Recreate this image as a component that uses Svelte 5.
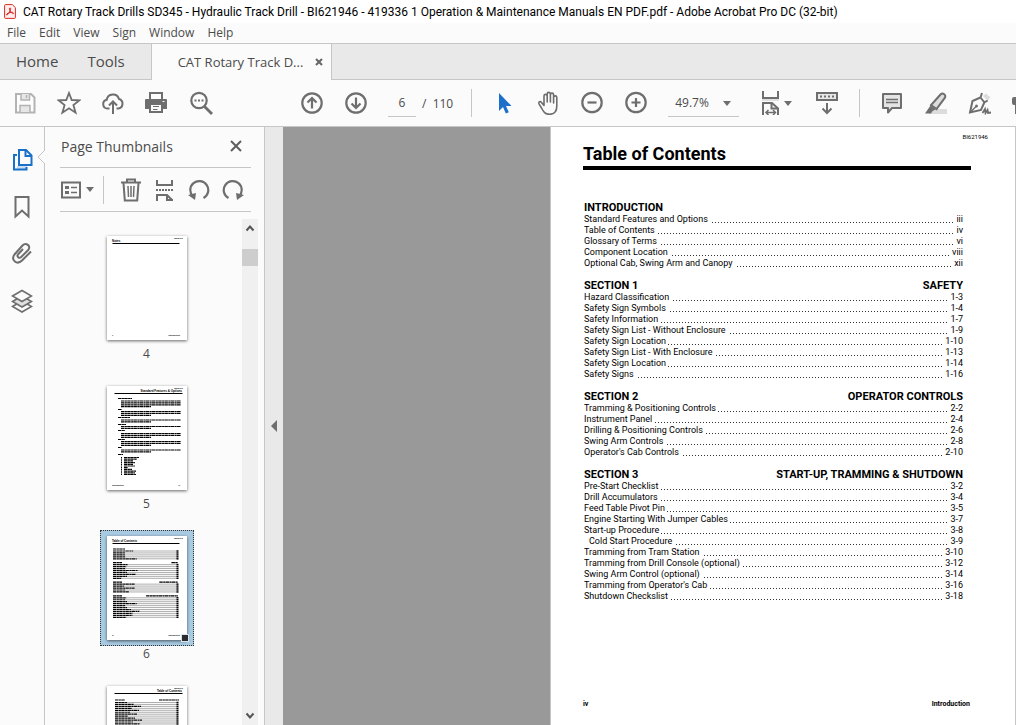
<script lang="ts">
  interface TocEntry {
    title: string;
    page: string;
    nested?: boolean;
  }

  interface TocSection {
    name: string;
    subject?: string;
    entries: TocEntry[];
  }

  interface Line {
    x: number;
    y: number;
    width: number;
    leader?: boolean;
  }

  interface Thumbnail {
    number: number;
    title: string;
    alignRight?: boolean;
    footer?: string[];
    lines: Line[];
  }

  const menus = ['File', 'Edit', 'View', 'Sign', 'Window', 'Help'];

  const sections: TocSection[] = [
    {
      name: 'INTRODUCTION',
      entries: [
        { title: 'Standard Features and Options', page: 'iii' },
        { title: 'Table of Contents', page: 'iv' },
        { title: 'Glossary of Terms', page: 'vi' },
        { title: 'Component Location', page: 'viii' },
        { title: 'Optional Cab, Swing Arm and Canopy', page: 'xii' }
      ]
    },
    {
      name: 'SECTION 1',
      subject: 'SAFETY',
      entries: [
        { title: 'Hazard Classification', page: '1-3' },
        { title: 'Safety Sign Symbols', page: '1-4' },
        { title: 'Safety Information', page: '1-7' },
        { title: 'Safety Sign List - Without Enclosure', page: '1-9' },
        { title: 'Safety Sign Location', page: '1-10' },
        { title: 'Safety Sign List - With Enclosure', page: '1-13' },
        { title: 'Safety Sign Location', page: '1-14' },
        { title: 'Safety Signs', page: '1-16' }
      ]
    },
    {
      name: 'SECTION 2',
      subject: 'OPERATOR CONTROLS',
      entries: [
        { title: 'Tramming & Positioning Controls', page: '2-2' },
        { title: 'Instrument Panel', page: '2-4' },
        { title: 'Drilling & Positioning Controls', page: '2-6' },
        { title: 'Swing Arm Controls', page: '2-8' },
        { title: "Operator's Cab Controls", page: '2-10' }
      ]
    },
    {
      name: 'SECTION 3',
      subject: 'START-UP, TRAMMING & SHUTDOWN',
      entries: [
        { title: 'Pre-Start Checklist', page: '3-2' },
        { title: 'Drill Accumulators', page: '3-4' },
        { title: 'Feed Table Pivot Pin', page: '3-5' },
        { title: 'Engine Starting With Jumper Cables', page: '3-7' },
        { title: 'Start-up Procedure', page: '3-8' },
        { title: 'Cold Start Procedure', page: '3-9', nested: true },
        { title: 'Tramming from Tram Station', page: '3-10' },
        { title: 'Tramming from Drill Console (optional)', page: '3-12' },
        { title: 'Swing Arm Control (optional)', page: '3-14' },
        { title: "Tramming from Operator's Cab", page: '3-16' },
        { title: 'Shutdown Checkslist', page: '3-18' }
      ]
    }
  ];

  // Body lines of the miniature contents page, taken from the real sections
  function contentsLines(): Line[] {
    const lines: Line[] = [];
    let y = 13;
    for (const section of sections) {
      lines.push({ x: 6, y, width: section.name.length });
      if (section.subject) {
        const width = section.subject.length * 1.1;
        lines.push({ x: 71 - width, y, width });
      }
      y += 2;
      for (const entry of section.entries) {
        lines.push({ x: 6, y, width: entry.title.length * 0.7, leader: true });
        y += 1.95;
      }
      y += 1.9;
    }
    return lines;
  }

  // Headed paragraphs followed by a short bulleted list
  function featureLines(): Line[] {
    const lines: Line[] = [];
    const groups = [
      [12.5, 14, 15, 4],
      [23.5, 4, 25.5, 3],
      [31.5, 12, 34, 2],
      [38.5, 8, 40.5, 2],
      [44.5, 7, 47.5, 3],
      [53.5, 7, 55.5, 3],
      [61.5, 4, 64, 2]
    ];
    for (const [y, width, start, count] of groups) {
      lines.push({ x: 11, y, width });
      for (let i = 0; i < count; i++) {
        lines.push({ x: 14, y: start + i * 1.9, width: i === count - 1 ? 30 : 60 });
      }
    }
    lines.push({ x: 11, y: 68.5, width: 5 });
    [15, 13, 9, 11, 9, 11, 4, 8, 12, 11, 12].forEach((width, i) => {
      lines.push({ x: 14, y: 71.5 + i * 1.7, width: 1 }, { x: 17, y: 71.5 + i * 1.7, width });
    });
    return lines;
  }

  function continuedLines(): Line[] {
    const lines: Line[] = [
      { x: 8, y: 14, width: 10 },
      { x: 52, y: 14, width: 20 }
    ];
    for (let i = 0; i < 40; i++) {
      lines.push({ x: 8, y: 16.5 + i * 1.95, width: 12 + ((i * 7) % 16), leader: true });
    }
    return lines;
  }

  const thumbnails: Thumbnail[] = [
    { number: 4, title: 'Notes', footer: ['ii', 'Introduction'], lines: [] },
    {
      number: 5,
      title: 'Standard Features & Options',
      alignRight: true,
      footer: ['Introduction', 'iii'],
      lines: featureLines()
    },
    { number: 6, title: 'Table of Contents', footer: ['iv', 'Introduction'], lines: contentsLines() },
    { number: 7, title: 'Table of Contents', alignRight: true, lines: continuedLines() }
  ];

  let currentPage = $state(6);
  let zoom = $state('49.7%');
</script>

{#snippet caret()}
  <svg class="caret" viewBox="0 0 8 5" aria-hidden="true"><path d="M0 0h8L4 5z" /></svg>
{/snippet}

<div class="app">
  <header class="titlebar">
    <svg class="titlebar__logo" viewBox="0 0 12 15" aria-hidden="true">
      <path d="M1.5.6h6.8l3.1 3v9.8a1 1 0 0 1-1 1H1.6a1 1 0 0 1-1-1V1.6a1 1 0 0 1 .9-1z" fill="#fff0ef" stroke="#dc2a22" />
      <path d="M6 3.9c1.1 0 .7 2.2-.6 4.4S2.7 11.6 2.5 10.7s3.3-2.5 5.1-2.5 2.4 1.2 1.6 1.6-3.8-3-3.8-5c0-.6.2-.9.6-.9z" fill="none" stroke="#d51f17" />
    </svg>
    <h1 class="titlebar__text">CAT Rotary Track Drills SD345 - Hydraulic Track Drill - BI621946 - 419336 1 Operation &amp; Maintenance Manuals EN PDF.pdf - Adobe Acrobat Pro DC (32-bit)</h1>
  </header>

  <nav class="menubar" aria-label="Menu">
    {#each menus as menu}
      <button class="menubar__item">{menu}</button>
    {/each}
  </nav>

  <div class="tabs">
    <button class="tabs__link">Home</button>
    <button class="tabs__link">Tools</button>
    <div class="tabs__document">
      <button class="tabs__name">CAT Rotary Track D...</button>
      <button class="tabs__close" aria-label="Close tab">
        <svg viewBox="0 0 8 8"><path d="M1 1l6 6M7 1L1 7" fill="none" stroke="#666" stroke-width="2" /></svg>
      </button>
    </div>
  </div>

  <div class="toolbar">
    <div class="toolbar__group">
      <button class="tool" aria-label="Save" disabled>
        <svg viewBox="0 0 24 24">
          <path d="M3 3h15l3.5 3.5V21.500H3z" fill="#fdfdfd" stroke="#b3b3b3" stroke-width="2" />
          <path d="M8 3v6h8.500V3M7 21v-6.500h10V21" fill="#e6e6e6" stroke="#b3b3b3" stroke-width="1.500" />
          <path d="M13.500 4v3" stroke="#b3b3b3" stroke-width="1.500" />
        </svg>
      </button>
      <button class="tool" aria-label="Star">
        <svg viewBox="0 0 24 24">
          <path d="M12 2l2.700 7 7.900.3-6.200 4.800 2.200 7.600L12 17.300l-6.600 4.400 2.200-7.600L1.400 9.300l7.900-.3z" fill="none" stroke="#6e6e6e" stroke-width="1.800" />
        </svg>
      </button>
      <button class="tool" aria-label="Upload to cloud">
        <svg viewBox="0 0 24 24">
          <path d="M8.500 17.500H6.400a4.400 4.400 0 0 1-.7-8.700A6.300 6.300 0 0 1 18 8a4.900 4.900 0 0 1-.4 9.500h-2.100" fill="none" stroke="#6e6e6e" stroke-width="2" />
          <path d="M12 23V11M8 14.500l4-4 4 4" fill="none" stroke="#6e6e6e" stroke-width="2" />
        </svg>
      </button>
      <button class="tool" aria-label="Print">
        <svg viewBox="0 0 24 24">
          <path d="M4 1h14v7H4z" fill="#6e6e6e" /><path d="M6 3h10v5H6z" fill="#fbfbfb" />
          <path d="M1 8h20a1 1 0 0 1 1 1v9h-4v4H4v-4H0V9a1 1 0 0 1 1-1z" fill="#6e6e6e" />
          <path d="M6 14h10v6H6z" fill="#fbfbfb" /><path d="M8 15.500h6M8 18.500h4.500" stroke="#6e6e6e" />
          <path d="M17.500 10.500h2" stroke="#fbfbfb" />
        </svg>
      </button>
      <button class="tool" aria-label="Find">
        <svg viewBox="0 0 24 24">
          <circle cx="10" cy="9.500" r="7.700" fill="none" stroke="#6e6e6e" stroke-width="2.200" />
          <path d="M15.500 15.500l7.500 7.500" stroke="#6e6e6e" stroke-width="2.800" />
          <path d="M5.500 9.500h2M9 9.500h2M12.500 9.500h2" stroke="#6e6e6e" stroke-width="2" />
        </svg>
      </button>
    </div>

    <div class="toolbar__group toolbar__group--pages">
      <button class="tool" aria-label="Previous page">
        <svg viewBox="0 0 24 24" fill="none" stroke="#6e6e6e" stroke-width="2.200">
          <circle cx="12" cy="12" r="9.700" /><path d="M12 17.500V7.500M7.500 11.500L12 7l4.500 4.500" />
        </svg>
      </button>
      <button class="tool" aria-label="Next page">
        <svg viewBox="0 0 24 24" fill="none" stroke="#6e6e6e" stroke-width="2.200">
          <circle cx="12" cy="12" r="9.700" /><path d="M12 6.500v10M7.500 12.500L12 17l4.500-4.500" />
        </svg>
      </button>
      <label class="page-count">
        <input class="page-count__input" aria-label="Page number" bind:value={currentPage} />
        <span>/&nbsp; 110</span>
      </label>
    </div>

    <div class="toolbar__group toolbar__group--view">
      <button class="tool" aria-label="Select">
        <svg viewBox="0 0 24 24">
          <path d="M7 2v18l4-4 2.800 6.500 3-1.300-2.800-6.200h5.500z" fill="#1d70c9" />
        </svg>
      </button>
      <button class="tool" aria-label="Hand">
        <svg viewBox="0 0 24 24">
          <path d="M8 14V5a1.600 1.600 0 0 1 3.200 0v6V3a1.600 1.600 0 0 1 3.200 0v8V3.700a1.600 1.600 0 0 1 3.200 0V12 6.500a1.600 1.600 0 0 1 3.200 0V15c0 5-2.500 8.300-7.300 8.300-4.400 0-6-2.300-8-6.300L3 12.800c-.7-2 1.300-2.800 2.500-1.400L8 14.500z" fill="#fbfbfb" stroke="#6e6e6e" stroke-width="1.600" stroke-linejoin="round" />
        </svg>
      </button>
      <button class="tool" aria-label="Zoom out">
        <svg viewBox="0 0 24 24" fill="none" stroke="#6e6e6e" stroke-width="2.200"><circle cx="12" cy="11.500" r="9.700" /><path d="M7.500 11.500h9" /></svg>
      </button>
      <button class="tool" aria-label="Zoom in">
        <svg viewBox="0 0 24 24" fill="none" stroke="#6e6e6e" stroke-width="2.200"><circle cx="12" cy="11.500" r="9.700" /><path d="M7.500 11.500h9M12 7v9" /></svg>
      </button>
      <div class="zoom">
        <select class="zoom__select" aria-label="Zoom level" bind:value={zoom}>
          <option>25%</option>
          <option>49.7%</option>
          <option>100%</option>
        </select>
        {@render caret()}
      </div>
      <button class="tool tool--menu" aria-label="Page fit">
        <svg viewBox="0 0 24 24" fill="none" stroke="#6e6e6e" stroke-width="2">
          <path d="M3 9h17" stroke="#e0e0e0" />
          <path d="M4 0v7h15V0M4 24V12h9l6 5.500V24" /><path d="M12.500 12v5.500H19" />
          <path d="M7.500 21.500h8.500M9.500 19L7 21.500 9.500 24M14 19l2.500 2.500L14 24" stroke-width="1.500" />
        </svg>
        {@render caret()}
      </button>
      <button class="tool" aria-label="Read mode">
        <svg viewBox="0 0 24 24" fill="none" stroke="#6e6e6e" stroke-width="2">
          <path d="M2 2h20v7H2z" fill="#e8e8e8" /><path d="M5 5.500h14" stroke-dasharray="2" />
          <path d="M12 12v9.500M7.500 17.500L12 22l4.500-4.500" />
        </svg>
      </button>
    </div>

    <div class="toolbar__group toolbar__group--comment">
      <button class="tool" aria-label="Add comment">
        <svg viewBox="0 0 24 24">
          <path d="M3 3h18v14h-9l-4 4.500V17H3z" fill="#e4e4e4" stroke="#6e6e6e" stroke-width="2" stroke-linejoin="round" />
          <path d="M6 8.500h12M6 11.500h12" stroke="#6e6e6e" stroke-width="1.300" />
        </svg>
      </button>
      <button class="tool" aria-label="Highlight">
        <svg viewBox="0 0 24 24">
          <path d="M9 18h14v5H5z" fill="#dcdcdc" />
          <path d="M16.500 3.500c1-1 2.500-1.200 3.700-.3s1.500 2.500.6 3.700L12.500 18l-5.500-4z" fill="#dcdcdc" stroke="#6e6e6e" stroke-width="2" />
          <path d="M6.500 14.500l5 4-3 1.500-1.500 2.500L1 22.500z" fill="#6e6e6e" />
        </svg>
      </button>
      <button class="tool" aria-label="Sign">
        <svg viewBox="0 0 24 24" fill="none" stroke="#6e6e6e" stroke-width="2">
          <path d="M15 5l4.500 4.500 3-3L18 2.500z" fill="#dcdcdc" stroke="none" />
          <path d="M14 2l-1.500 4.500L4.500 10 2 21.500l11-2.500 3.300-7.500 3.400-2M12.500 6.500l4 5" />
          <path d="M2 21.500l6-6" stroke-width="1.500" /><circle cx="8.500" cy="15" r="1.500" fill="#6e6e6e" stroke="none" />
          <path d="M14.500 22l2.500-4 .5 4 2-3 .5 3 3-.5" stroke-width="1.800" />
        </svg>
      </button>
      <button class="tool" aria-label="More tools">
        <svg viewBox="0 0 24 24">
          <path d="M2 6h2V2h8v21H3v-9H2a2 2 0 0 1-2-2V8a2 2 0 0 1 2-2z" fill="#6e6e6e" /><path d="M5 14h7v7H5z" fill="#fbfbfb" />
        </svg>
      </button>
    </div>
  </div>

  <main class="workspace">
    <nav class="rail" aria-label="Navigation panels">
      <button class="rail__item rail__item--active" aria-label="Page thumbnails">
        <svg viewBox="0 0 22 24" fill="none" stroke="#1870c8" stroke-width="2">
          <path d="M6 18h10v3H6z" fill="#c9def3" stroke="none" />
          <path d="M8 2h7l5.500 5.500V17H8z" /><path d="M14.500 2v6h6M6 7H3v14.500h12.500V19" />
        </svg>
      </button>
      <button class="rail__item" aria-label="Bookmarks">
        <svg viewBox="0 0 22 24" fill="none" stroke="#6e6e6e" stroke-width="2"><path d="M4.500 2h13v19.500L11 15.500l-6.500 6z" /></svg>
      </button>
      <button class="rail__item" aria-label="Attachments">
        <svg viewBox="0 0 22 24" fill="none" stroke="#6e6e6e" stroke-width="2">
          <path d="M20 9.500l-9 9c-5 5-11.500-.5-7.500-6l8-9C15-.2 20.500 4 17.200 8l-7 7c-2.200 2-5-.5-3-2.800L12 7" />
        </svg>
      </button>
      <button class="rail__item" aria-label="Layers">
        <svg viewBox="0 0 22 24" fill="#fbfbfb" stroke="#6e6e6e" stroke-width="1.600">
          <path d="M1.500 17.500L11 12l9.500 5.500L11 23z" /><path d="M1.500 12.500L11 7l9.500 5.500L11 18z" fill="#e0e0e0" /><path d="M1.500 7L11 1.500 20.500 7 11 12.500z" />
        </svg>
      </button>
      <svg class="rail__pointer" viewBox="0 0 8 14" aria-hidden="true"><path d="M8 0L1 7l7 7" fill="#fbfbfb" stroke="#c6c6c6" /></svg>
    </nav>

    <section class="panel">
      <div class="panel__header">
        <h2 class="panel__title">Page Thumbnails</h2>
        <button class="panel__close" aria-label="Close panel">
          <svg viewBox="0 0 12 12"><path d="M1 1l10 10M11 1L1 11" stroke="#5e5e5e" stroke-width="2" /></svg>
        </button>
      </div>
      <div class="panel__tools">
        <button class="panel__options" aria-label="Options">
          <svg viewBox="0 0 20 20" fill="none" stroke="#6e6e6e" stroke-width="2">
            <path d="M1 2.500h18v15H1z" /><path d="M4 7.500h4M4 12.500h4" stroke-width="3" /><path d="M10 7.500h6M10 12.500h6" stroke-width="1.500" />
          </svg>
          {@render caret()}
        </button>
        <div class="panel__icons">
          <button aria-label="Delete pages">
            <svg viewBox="0 0 22 24" fill="none" stroke="#6e6e6e" stroke-width="2">
              <path d="M1 4.500h20M7 4V1.500h8V4M3.500 5l1.300 17.500h12.400L18.500 5" /><path d="M8 8l.5 11M11 8v11M14 8l-.5 11" stroke-width="1.500" />
            </svg>
          </button>
          <button aria-label="Insert pages">
            <svg viewBox="0 0 22 24" fill="none" stroke="#6e6e6e" stroke-width="2">
              <path d="M3 2v5h15V2M3 23v-6h10l5 5M13 17v5h6" /><path d="M2 12h17" stroke-dasharray="2 1" />
            </svg>
          </button>
          <button aria-label="Rotate counterclockwise">
            <svg viewBox="0 0 22 24" fill="none" stroke="#6e6e6e" stroke-width="2.200">
              <path d="M5 18.500A9 9 0 1 1 15.500 20" /><path d="M0 17l8-2-1 7z" fill="#6e6e6e" stroke="none" />
            </svg>
          </button>
          <button aria-label="Rotate clockwise">
            <svg viewBox="0 0 22 24" fill="none" stroke="#6e6e6e" stroke-width="2.200">
              <path d="M17 18.500A9 9 0 1 0 6.500 20" /><path d="M22 17l-8-2 1 7z" fill="#6e6e6e" stroke="none" />
            </svg>
          </button>
        </div>
      </div>

      <div class="panel__body">
        <ul class="thumbnails">
          {#each thumbnails as thumb (thumb.number)}
            <li>
              <button class="thumbnail" onclick={() => (currentPage = thumb.number)}>
                <span class="thumbnail__frame" class:thumbnail__frame--selected={thumb.number === currentPage}>
                  <svg class="thumbnail__page" viewBox="0 0 80 104" aria-hidden="true">
                    <text x="76" y="3" text-anchor="end" class="thumbnail__code">BI621946</text>
                    <text
                      x={thumb.alignRight ? 75 : 5}
                      y="6"
                      text-anchor={thumb.alignRight ? 'end' : 'start'}
                      class="thumbnail__title">{thumb.title}</text
                    >
                    <path d={thumb.alignRight ? 'M7.500 7.500h68' : 'M5.500 7.500h67'} stroke="#000" />
                    {#each thumb.lines as line}
                      <path d="M{line.x} {line.y}h{line.width}" stroke="#000" stroke-width="1.200" stroke-dasharray="3.500 .4 2 .3" />
                      {#if line.leader}
                        <path d="M{line.x + line.width} {line.y}H70" stroke="#999" stroke-width=".8" />
                        <path d="M69.500 {line.y}h2" stroke="#000" stroke-width="1.500" />
                      {/if}
                    {/each}
                    {#if thumb.footer}
                      <text x="5" y="100" class="thumbnail__footer">{thumb.footer[0]}</text>
                      <text x="73" y="100" text-anchor="end" class="thumbnail__footer">{thumb.footer[1]}</text>
                    {/if}
                  </svg>
                  {#if thumb.number === currentPage}
                    <span class="thumbnail__handle"></span>
                  {/if}
                </span>
                <span class="thumbnail__number">{thumb.number}</span>
              </button>
            </li>
          {/each}
        </ul>
        <div class="scrollbar">
          <svg viewBox="0 0 10 8" fill="none" stroke="#555" stroke-width="2"><path d="M1.500 6.500L5 2.500l3.500 4" /></svg>
          <div class="scrollbar__thumb"></div>
          <svg viewBox="0 0 10 8" fill="none" stroke="#555" stroke-width="2"><path d="M1.500 1.500L5 5.500l3.500-4" /></svg>
        </div>
      </div>
    </section>

    <button class="splitter" aria-label="Collapse panel">
      <svg viewBox="0 0 6 12"><path d="M6 0v12L0 6z" fill="#6e6e6e" /></svg>
    </button>

    <div class="document">
      <article class="page">
        <p class="page__code">BI621946</p>
        <h2 class="page__title">Table of Contents</h2>
        <div class="toc">
          {#each sections as section}
            <section>
              <h3 class="toc__heading">
                <span>{section.name}</span>
                {#if section.subject}<span>{section.subject}</span>{/if}
              </h3>
              <ul class="toc__entries">
                {#each section.entries as entry}
                  <li class="toc__entry" class:toc__entry--nested={entry.nested}>
                    <span>{entry.title}</span>
                    <span class="toc__leader"></span>
                    <span>{entry.page}</span>
                  </li>
                {/each}
              </ul>
            </section>
          {/each}
        </div>
        <footer class="page__footer">
          <span>iv</span>
          <span>Introduction</span>
        </footer>
      </article>
    </div>
  </main>
</div>

<style>
  :global(body) {
    margin: 0;
  }

  .app {
    display: flex;
    flex-direction: column;
    height: 100vh;
    overflow: hidden;
    background: #fbfbfb;
    color: #4b4b4b;
    font-family: "Open Sans", "Noto Sans", sans-serif;
    font-size: 12px;
  }

  h1,
  h2,
  h3,
  p,
  ul {
    margin: 0;
    padding: 0;
    font-weight: 400;
    list-style: none;
  }

  button,
  input,
  select {
    margin: 0;
    padding: 0;
    border: 0;
    background: none;
    color: inherit;
    font: inherit;
  }

  svg {
    display: block;
    flex: none;
  }

  .caret {
    width: 8px;
    height: 5px;
    fill: #6e6e6e;
  }

  .titlebar {
    display: flex;
    align-items: center;
    flex: none;
    gap: 7px;
    height: 23px;
    padding-left: 4px;
    background: #fff;
  }

  .titlebar__logo {
    width: 12px;
    height: 15px;
  }

  .titlebar__text {
    color: #000;
    font-family: Roboto, "Open Sans", sans-serif;
    font-size: 12px;
    white-space: nowrap;
  }

  .menubar {
    display: flex;
    flex: none;
    gap: 13px;
    height: 20px;
    padding-left: 7px;
  }

  .menubar__item {
    padding-bottom: 2px;
  }

  .tabs {
    display: flex;
    align-items: stretch;
    flex: none;
    height: 36px;
    border-top: 1px solid #c6c6c6;
    box-shadow: inset 0 -1px #c6c6c6;
    background: #e9e9e9;
    font-size: 15px;
  }

  .tabs__link {
    padding: 0 13px 2px 16px;
  }

  .tabs__document {
    display: flex;
    align-items: center;
    justify-content: space-between;
    box-sizing: border-box;
    width: 181px;
    margin-left: 13px;
    padding: 0 8px 0 26px;
    border: solid #c6c6c6;
    border-width: 0 1px;
    background: #fbfbfb;
    font-size: 13px;
  }

  .tabs__close svg {
    width: 8px;
    height: 8px;
  }

  .toolbar {
    display: flex;
    align-items: center;
    flex: none;
    height: 46px;
    padding-left: 13px;
    border-bottom: 1px solid #c6c6c6;
    overflow: hidden;
  }

  .toolbar__group {
    display: flex;
    align-items: center;
    flex: none;
    gap: 20px;
    height: 28px;
  }

  .toolbar__group--pages {
    margin-left: 87px;
  }

  .toolbar__group--view,
  .toolbar__group--comment {
    margin-left: 18px;
    padding-left: 20px;
    border-left: 1px solid #c6c6c6;
  }

  .toolbar__group--comment {
    margin-left: 20px;
  }

  .tool svg:first-child {
    width: 24px;
    height: 24px;
  }

  .tool--menu {
    display: flex;
    align-items: center;
    gap: 1px;
    margin-right: 3px;
  }

  .page-count {
    display: flex;
    align-items: center;
    gap: 6px;
  }

  .page-count__input {
    width: 28px;
    height: 27px;
    border-bottom: 1px solid #c6c6c6;
    border-radius: 0;
    text-align: center;
  }

  .zoom {
    position: relative;
    border-bottom: 1px solid #c6c6c6;
  }

  .zoom__select {
    width: 71px;
    height: 27px;
    padding-left: 7px;
    appearance: none;
  }

  .zoom .caret {
    position: absolute;
    top: 12px;
    right: 8px;
    pointer-events: none;
  }

  .workspace {
    display: flex;
    flex: 1;
    min-height: 0;
  }

  .rail {
    position: relative;
    display: flex;
    flex-direction: column;
    align-items: center;
    flex: none;
    gap: 23px;
    width: 44px;
    padding-top: 21px;
    border-right: 1px solid #c6c6c6;
  }

  .rail__item svg {
    width: 22px;
    height: 24px;
  }

  .rail__pointer {
    position: absolute;
    top: 23px;
    right: -1px;
    width: 8px;
    height: 14px;
  }

  .panel {
    display: flex;
    flex-direction: column;
    flex: none;
    width: 219px;
    border-right: 1px solid #c6c6c6;
  }

  .panel__header {
    display: flex;
    align-items: center;
    justify-content: space-between;
    height: 40px;
    margin: 0 13px 0 15px;
    border-bottom: 1px solid #c6c6c6;
  }

  .panel__title {
    padding: 0 0 2px 1px;
    font-size: 14px;
  }

  .panel__close {
    padding: 0 9px 2px 0;
  }

  .panel__close svg {
    width: 12px;
    height: 12px;
  }

  .panel__tools {
    display: flex;
    align-items: center;
    height: 43px;
    margin: 0 13px 0 15px;
    border-bottom: 1px solid #c6c6c6;
  }

  .panel__options {
    display: flex;
    align-items: center;
    gap: 5px;
    height: 28px;
    padding: 0 9px 0 1px;
    border-right: 1px solid #c6c6c6;
  }

  .panel__options svg:first-child {
    width: 20px;
    height: 20px;
  }

  .panel__icons {
    display: flex;
    gap: 12px;
    padding-left: 16px;
  }

  .panel__icons svg {
    width: 22px;
    height: 24px;
  }

  .panel__body {
    display: flex;
    flex: 1;
    min-height: 0;
    margin-top: 7px;
  }

  .thumbnails {
    flex: 1;
    padding-top: 11px;
    padding-left: 6px;
    overflow: hidden;
  }

  .thumbnail {
    display: flex;
    flex-direction: column;
    align-items: center;
    width: 100%;
    height: 150px;
  }

  .thumbnail__frame {
    position: relative;
    padding: 5px 6px;
    border: 1px solid transparent;
  }

  .thumbnail__frame--selected {
    border: 1px dotted #333;
    background: #a9cbe2;
  }

  .thumbnail__page {
    width: 80px;
    height: 104px;
    background: #fff;
    box-shadow: 0 1px 3px rgba(0, 0, 0, 0.6);
    font-family: "Liberation Sans", Arial, sans-serif;
    font-weight: 700;
  }

  .thumbnail__code,
  .thumbnail__footer {
    font-size: 2px;
  }

  .thumbnail__title {
    font-size: 3px;
  }

  .thumbnail__handle {
    position: absolute;
    right: 4px;
    bottom: 3px;
    width: 6px;
    height: 6px;
    border: 1px solid #d7e5ef;
    background: #2c2c2c;
  }

  .thumbnail__number {
    line-height: 16px;
  }

  .scrollbar {
    display: flex;
    flex-direction: column;
    align-items: center;
    box-sizing: border-box;
    width: 16px;
    margin-right: 6px;
    padding: 5px 0;
    background: #f0f0f0;
  }

  .scrollbar svg {
    width: 10px;
    height: 8px;
  }

  .scrollbar__thumb {
    width: 100%;
    height: 17px;
    margin-top: 17px;
    margin-bottom: auto;
    background: #cdcdcd;
  }

  .splitter {
    display: flex;
    align-items: center;
    justify-content: center;
    flex: none;
    width: 18px;
    background: #e9e9e9;
  }

  .splitter svg {
    width: 6px;
    height: 12px;
  }

  .document {
    display: flex;
    flex: 1;
    min-width: 0;
    padding-left: 267px;
    background: #999;
  }

  .page {
    display: flex;
    flex-direction: column;
    flex: 1;
    min-width: 0;
    padding: 5px 44px 15px 32px;
    border: solid #c6c6c6;
    border-width: 0 1px;
    background: #fff;
    color: #000;
    font-family: Roboto, "Liberation Sans", Arial, sans-serif;
    font-size: 9px;
  }

  .page__code {
    margin-right: -17px;
    font-size: 6px;
    line-height: 10px;
    text-align: right;
  }

  .page__title {
    border-bottom: 4px solid #000;
    font-size: 18px;
    font-weight: 700;
    line-height: 24px;
  }

  .toc {
    display: flex;
    flex-direction: column;
    gap: 10px;
    margin-top: 31px;
    padding-left: 1px;
    padding-right: 8px;
  }

  .toc__heading {
    display: flex;
    justify-content: space-between;
    font-size: 11px;
    font-weight: 700;
    line-height: 13px;
  }

  .toc__entry {
    display: flex;
    gap: 2px;
    line-height: 11px;
    white-space: nowrap;
  }

  .toc__entry--nested {
    padding-left: 5px;
  }

  .toc__leader {
    flex: 1;
    height: 9px;
    background: repeating-linear-gradient(to left, transparent 0 1px, #333 1px 2px, transparent 2px 3px) bottom / 100% 1px no-repeat;
  }

  .page__footer {
    display: flex;
    justify-content: space-between;
    margin-top: auto;
    padding-right: 1px;
    font-size: 7px;
    font-weight: 700;
    line-height: 12px;
  }
</style>
